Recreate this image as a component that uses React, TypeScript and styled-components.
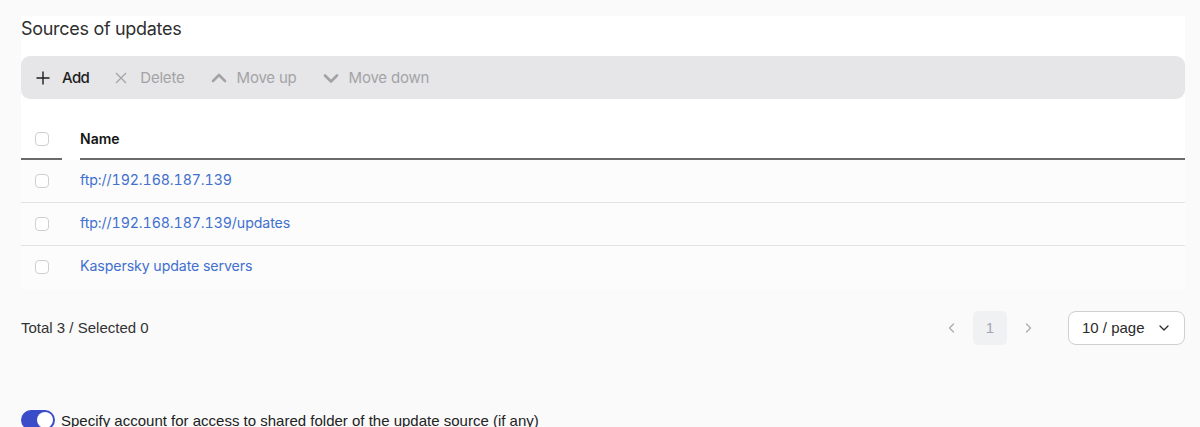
import React from 'react';
import styled, { createGlobalStyle } from 'styled-components';

const GlobalStyle = createGlobalStyle`
  html, body {
    margin: 0;
    padding: 0;
    background: #fafafa;
  }
  body {
    font-family: Inter, "Noto Sans", sans-serif;
    color: #2b2b2b;
  }
`;

const Page = styled.div`
  width: 1200px;
  height: 427px;
  overflow: hidden;
  padding: 16px 15px 0 21px;
  box-sizing: border-box;
`;

const Panel = styled.div`
  background: #ffffff;
  display: flex;
  flex-direction: column;
`;

const Title = styled.h2`
  margin: 0;
  font-size: 18px;
  line-height: 26px;
  font-weight: 400;
  letter-spacing: -0.3px;
  color: #2f2f2f;
`;

const Toolbar = styled.div`
  margin-top: 14px;
  height: 43px;
  background: #e6e6e8;
  border-radius: 9px;
  display: flex;
  align-items: center;
  padding: 0 0 0 15px;
  gap: 26px;
`;

const ToolButton = styled.button<{ $disabled?: boolean; $gap: number }>`
  display: flex;
  align-items: center;
  gap: ${(p) => p.$gap}px;
  border: none;
  background: none;
  padding: 0;
  font-family: Inter, "Noto Sans", sans-serif;
  font-size: 15px;
  font-weight: ${(p) => (p.$disabled ? 400 : 500)};
  letter-spacing: ${(p) => (p.$disabled ? '-0.2px' : '-0.6px')};
  color: ${(p) => (p.$disabled ? '#a3a3a6' : '#1f1f1f')};
  cursor: ${(p) => (p.$disabled ? 'default' : 'pointer')};
  svg {
    flex: none;
  }
`;

const Table = styled.div`
  margin-top: 18px;
  display: flex;
  flex-direction: column;
`;

const HeaderRow = styled.div`
  display: grid;
  grid-template-columns: 41px 1fr;
  column-gap: 18px;
  height: 43px;
`;

const HeaderCell = styled.div`
  display: flex;
  align-items: center;
  padding-top: 2px;
  border-bottom: 2px solid #6a6a6a;
  font-size: 14px;
  font-weight: 600;
  color: #151515;
`;

const CheckCell = styled.div`
  display: flex;
  align-items: center;
  padding-left: 14px;
`;

const HeaderCheckCell = styled(CheckCell)`
  padding-top: 2px;
  border-bottom: 2px solid #6a6a6a;
`;

const Checkbox = styled.span`
  width: 12px;
  height: 12px;
  border: 1px solid #cfcfd2;
  border-radius: 4px;
  background: #ffffff;
  display: inline-block;
`;

const BodyRow = styled.div<{ $last?: boolean }>`
  display: grid;
  grid-template-columns: 41px 1fr;
  column-gap: 18px;
  height: 42px;
  background: #fcfcfc;
  border-bottom: 1px solid ${(p) => (p.$last ? '#fcfcfc' : '#e2e2e2')};
`;

const LinkCell = styled.a`
  display: flex;
  align-items: center;
  padding-bottom: 3px;
  font-size: 14.2px;
  font-feature-settings: 'tnum' 1;
  color: #4170cf;
  text-decoration: none;
  letter-spacing: -0.1px;
`;

const Footer = styled.div`
  margin-top: 21px;
  height: 35px;
  display: flex;
  align-items: center;
  justify-content: space-between;
  font-family: "Liberation Sans", Arial, sans-serif;
`;

const Total = styled.span`
  font-size: 15px;
  color: #333333;
`;

const Pager = styled.div`
  display: flex;
  align-items: center;
`;

const PageArrow = styled.span`
  width: 24px;
  display: flex;
  justify-content: center;
  color: #a9acb3;
`;

const PageNumber = styled.span`
  width: 34px;
  height: 34px;
  margin: 0 9px;
  border-radius: 5px;
  background: #f0f1f3;
  color: #a2a6ae;
  font-size: 15px;
  display: flex;
  align-items: center;
  justify-content: center;
`;

const SizeSelect = styled.div`
  margin-left: 28px;
  width: 117px;
  height: 34px;
  box-sizing: border-box;
  border: 1px solid #cfcfd3;
  border-radius: 8px;
  background: #ffffff;
  display: flex;
  align-items: center;
  padding: 0 14px 0 13px;
  justify-content: space-between;
  font-size: 15px;
  color: #2a2a2a;
`;

const ToggleRow = styled.label`
  margin-top: 65px;
  display: flex;
  align-items: center;
  gap: 6px;
  font-family: "Liberation Sans", Arial, sans-serif;
  font-size: 15px;
  color: #222222;
`;

const Switch = styled.span<{ $on: boolean }>`
  width: 34px;
  height: 20px;
  border-radius: 10px;
  background: ${(p) => (p.$on ? '#3b4cc9' : '#c4c4c8')};
  display: flex;
  align-items: center;
  justify-content: ${(p) => (p.$on ? 'flex-end' : 'flex-start')};
  padding: 0 2px;
  box-sizing: border-box;
  &::after {
    content: '';
    width: 16px;
    height: 16px;
    border-radius: 50%;
    background: #ffffff;
  }
`;

const PlusIcon = () => (
  <svg width="14" height="14" viewBox="0 0 14 14" fill="none" stroke="#1f1f1f" strokeWidth="1.4">
    <path d="M7 0.5v13M0.5 7h13" />
  </svg>
);

const CrossIcon = () => (
  <svg width="12" height="12" viewBox="0 0 12 12" fill="none" stroke="#a3a3a6" strokeWidth="1.2">
    <path d="M1 1l10 10M11 1L1 11" />
  </svg>
);

const ChevronIcon = ({ up }: { up?: boolean }) => (
  <svg width="16" height="16" viewBox="0 0 16 16" fill="none" stroke="#a3a3a6" strokeWidth="2.6" strokeLinecap="round" strokeLinejoin="round">
    <path d={up ? 'M2 11L8 5l6 6' : 'M2 5.5l6 6 6-6'} />
  </svg>
);

const SmallChevron = ({ dir }: { dir: 'left' | 'right' | 'down' }) => {
  const d = dir === 'left' ? 'M7.5 2L3.5 6l4 4' : dir === 'right' ? 'M4.5 2l4 4-4 4' : 'M2 4l4 4 4-4';
  return (
    <svg width="12" height="12" viewBox="0 0 12 12" fill="none" stroke="currentColor" strokeWidth="1.3" strokeLinecap="round" strokeLinejoin="round">
      <path d={d} />
    </svg>
  );
};

const sources = ['ftp://192.168.187.139', 'ftp://192.168.187.139/updates', 'Kaspersky update servers'];

export default function App() {
  return (
    <Page>
      <GlobalStyle />
      <Panel>
        <Title>Sources of updates</Title>
        <Toolbar>
          <ToolButton $gap={12}>
            <PlusIcon />
            Add
          </ToolButton>
          <ToolButton $disabled $gap={13}>
            <CrossIcon />
            Delete
          </ToolButton>
          <ToolButton $disabled $gap={10}>
            <ChevronIcon up />
            Move up
          </ToolButton>
          <ToolButton $disabled $gap={10}>
            <ChevronIcon />
            Move down
          </ToolButton>
        </Toolbar>
        <Table>
          <HeaderRow>
            <HeaderCheckCell>
              <Checkbox />
            </HeaderCheckCell>
            <HeaderCell>Name</HeaderCell>
          </HeaderRow>
          {sources.map((s, i) => (
            <BodyRow key={s} $last={i === sources.length - 1}>
              <CheckCell>
                <Checkbox />
              </CheckCell>
              <LinkCell href="#">{s}</LinkCell>
            </BodyRow>
          ))}
        </Table>
      </Panel>
      <Footer>
        <Total>Total 3 / Selected 0</Total>
        <Pager>
          <PageArrow>
            <SmallChevron dir="left" />
          </PageArrow>
          <PageNumber>1</PageNumber>
          <PageArrow>
            <SmallChevron dir="right" />
          </PageArrow>
          <SizeSelect>
            10 / page
            <SmallChevron dir="down" />
          </SizeSelect>
        </Pager>
      </Footer>
      <ToggleRow>
        <Switch $on />
        Specify account for access to shared folder of the update source (if any)
      </ToggleRow>
    </Page>
  );
}
